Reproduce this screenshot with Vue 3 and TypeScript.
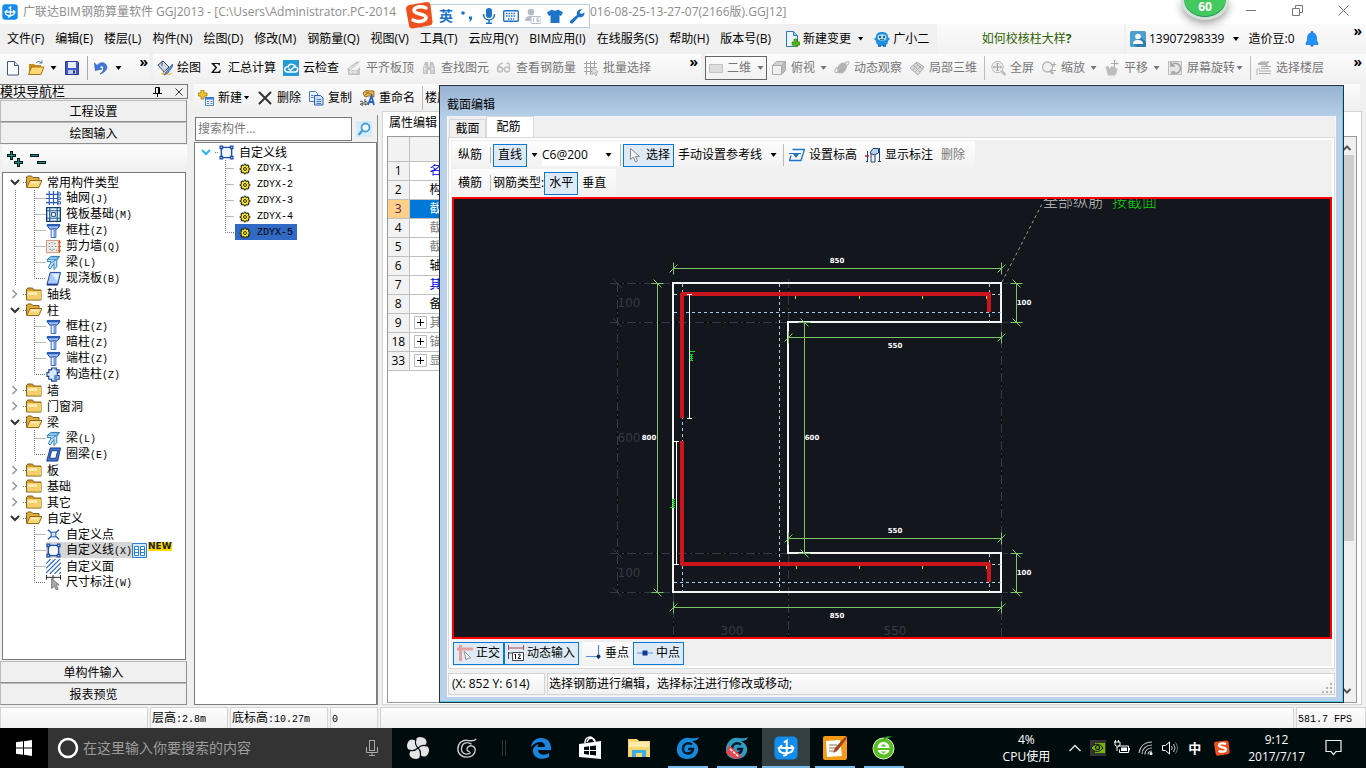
<script setup lang="ts">
import { ref } from 'vue'

interface Tool {
  icon: string
  label: string
  off?: boolean
  caret?: 'wide' | 'tight'
  sep?: boolean
}
interface Row {
  label: string
  key?: string
  icon: string
  child?: boolean
  open?: boolean
  last?: boolean
  rail?: boolean
  selected?: boolean
}

const column = '<path d="M1 2.500h14l-3 4h-8z" fill="#9dbff0" stroke="#1c4a9c"/><path d="M1 1h14v2.500H1z" fill="#2b5cb8"/><path d="M5.500 6.500h5v9h-5z" fill="#f2f7ff" stroke="#2b5cb8"/><path d="M9 7v8" stroke="#6d9be6" stroke-width="2"/>'
const beam = '<path d="M1.500 4.500l4-3h9l-3 4v7l-3 3V9l-4 6-2-1.500 3-6.500h-4z" fill="#bfe3fa" stroke="#2477b8"/><path d="M2 4.500h9l3-3M6 8l5-3M5 2l7 0" stroke="#2477b8" fill="none"/>'
const frame = '<path d="M2.500 2.500h11v11h-11z" fill="#f3f7ff" stroke="#1d50a8" stroke-width="1.500"/><path d="M.5.5h4v4h-4zM11.500.5h4v4h-4zM.5 11.500h4v4h-4zM11.500 11.500h4v4h-4z" fill="#1d50a8"/><path d="M1.800 1.800h1.400v1.400H1.800zM12.800 1.800h1.400v1.400h-1.400zM1.800 12.800h1.400v1.400H1.800zM12.800 12.800h1.400v1.400h-1.400z" fill="#9cc4ff"/>'

const icons: Record<string, string> = {
  app: '<rect x=".3" y=".3" width="15.400" height="15.400" rx="3" fill="#118df0"/><path d="M7 4l1.500-1v8.500q0 1.500-2 1.500M3 8h10M3.200 8c0 2.500 2 3.500 4.500 3.500 3 0 5-1 5-3.500M5 6.500L3.300 8M11.500 6.500L13 8" fill="none" stroke="#fff" stroke-width="1.300" stroke-linecap="round"/>',
  file: '<path d="M2.500 1.500h7l4 4v9.500h-11z" fill="#fff" stroke="#3c5a80"/><path d="M9.500 1.500v4h4" fill="#cfe0f4" stroke="#3c5a80"/>',
  open: '<path d="M1 4h5l1 1h6v9H1z" fill="#c98d1c"/><path d="M3.500 7H16l-3 7.500H.5z" fill="#ffd873" stroke="#a87414"/><path d="M8 3c2-2 4-2 5 0M11.500 3H14V.5" stroke="#44709c" fill="none"/>',
  save: '<path d="M1.500 1.500h12l1 1v12h-13z" fill="#4257c9" stroke="#28379a"/><path d="M4 2h8v6H4z" fill="#e8edff"/><path d="M4 10h8v4H4z" fill="#c2cbe6"/><path d="M9 10.500h2v3H9z" fill="#26368e"/>',
  undo: '<path d="M1.500 3l.8 7.500L9 9 6.500 7.300C8.500 4.500 11 6 10.500 9c-.3 2-1.500 3.500-3.500 5 5-1.500 8-5 6.500-8.500C12 2 7 1.500 4 5.500z" fill="#3b78dc" stroke="#2456ae" stroke-width=".6"/>',
  paint: '<path d="M1 5l5-4 6 6-5 5z" fill="#cfd6df" stroke="#3a4a60"/><path d="M5 6V1" stroke="#3a4a60"/><path d="M15.500 4L9 12l-2 3 3.500-1.500L16 6z" fill="#5b9ce0" stroke="#1f4a8c" stroke-width=".7"/><path d="M7 15l-3-1 4-3z" fill="#e8b02c"/><path d="M9 14c2 2 5 1 6-1z" fill="#f0c13a"/>',
  sum: '<path d="M3.500 3h8.300v2.600h-.8C10.700 4.200 10 4 8 4H6.200l3 3.600-3.500 4.200h3c2 0 2.700-.4 3.200-2h.8l-.5 3.200H3.400v-.8l4-4.600-3.900-3.900z" fill="#111"/>',
  cloud: '<path d="M0 0h16v16H0z" fill="#259bd8"/><path d="M4 12c-4-1-2-6 1-5 1-4 7-3 7 0 4 0 3 5 0 5z" fill="none" stroke="#fff" stroke-width="1.500"/><path d="M5.500 8.500l2 2 5-5" fill="none" stroke="#fff" stroke-width="1.500"/>',
  slab: '<path d="M1 9l9-7 4-1-4 5-8 5zM2 10h9l3-3v8H2z" fill="#c3c3c3"/><path d="M3 12h9M3 9l8-5M5 10v4M9 10v4" stroke="#eee"/>',
  find: '<path d="M2 8l2-6h3l.5 5h1L9 2h3l2 6v6H9v-4H7v4H2z" fill="#c0c0c0"/><path d="M4 5v8M11 5v8M3 9h3M10 9h3" stroke="#ededed"/>',
  glasses: '<circle cx="4" cy="9.500" r="2.500" fill="none" stroke="#bdbdbd" stroke-width="1.500"/><circle cx="11" cy="9.500" r="2.500" fill="none" stroke="#bdbdbd" stroke-width="1.500"/><path d="M1.500 8C2 5 5 3 7 3M6.500 9h2M13.500 9V4c-1-1-2-1-3 0" fill="none" stroke="#bdbdbd" stroke-width="1.300"/>',
  batch: '<path d="M3.500 1v14M7.500 1v14M11.500 1v6M1 3.500h13M1 7.500h13M1 11.500h8" stroke="#a5a5a5" fill="none"/><path d="M9 7l6 5-2.500.3L14 15l-1.500.6-1.300-2.700L9 14.500z" fill="#e8e8e8" stroke="#999" stroke-width=".7"/>',
  flat: '<path d="M1.500 4.500h13v8h-13z" fill="#ddd" stroke="#c2c2c2"/>',
  cube: '<path d="M1.500 5.500h9v9h-9z" fill="#efefef" stroke="#ababab"/><path d="M1.500 5.500l4-4h9l-4 4z" fill="#d4d4d4" stroke="#ababab"/><path d="M10.500 5.500l4-4v9l-4 4z" fill="#bababa" stroke="#ababab"/>',
  orbit: '<ellipse cx="8" cy="8" rx="4.500" ry="6" transform="rotate(35 8 8)" fill="#bcbcbc"/><path d="M3 7c-6 7 1 8 9 0 5-5 3-7-1-4M5 12l6-8M4 9l5-6M7 13l5-6" fill="none" stroke="#a6a6a6"/>',
  local: '<path d="M1 8l7-6 7 5-6 8z" fill="#ddd" stroke="#aaa"/><path d="M4 5l7 7M7 3l6 6M4 10l6-7M6 12l7-7" stroke="#aaa" fill="none"/>',
  full: '<circle cx="7.500" cy="7" r="5.700" fill="#efefef" stroke="#b6b6b6"/><path d="M7.500 3v8M3.500 7h8M6.300 4.200L7.500 3l1.200 1.200M6.300 9.800L7.500 11l1.200-1.200M4.700 5.800L3.500 7l1.200 1.200M10.300 5.800L11.500 7l-1.200 1.200" fill="none" stroke="#a0a0a0"/><path d="M11.500 11l4 4" stroke="#bbb" stroke-width="2.500"/>',
  zoom: '<circle cx="6.500" cy="7" r="5" fill="#f1f1f1" stroke="#b6b6b6" stroke-width="1.300"/><path d="M9 10.500l3 3.500" stroke="#b2b2b2" stroke-width="2.500"/><path d="M13 2v5M10.700 4.500h4.600M11 10.500h4" stroke="#aaa"/>',
  pan: '<path d="M1.500 7l3-1 1 3 2-3 3 1 3 2-1 4-1.500 2.500H4z" fill="#bdbdbd"/><path d="M10.500 0v7M7 3.500h7M9.500 1l1-1 1 1M13 2.500l1 1-1 1" stroke="#aaa" fill="none"/>',
  spin: '<path d="M1.500 1.500h13v13h-13z" fill="#e5e5e5" stroke="#bdbdbd"/><path d="M4 6a5 5 0 1 1 1 6M4 2v4h4M8 12H5v3" fill="none" stroke="#a2a2a2" stroke-width="1.500"/>',
  floors: '<path d="M2 4l3-2h8l-3 2zM5 6.500h10M5 8.500h8M3 11h12M3 13.500h12M2 4h9v2" fill="#ccc" stroke="#a9a9a9"/><path d="M1 9v6M1 9h3" stroke="#b5b5b5"/>',
  change: '<path d="M2.500.5h7l4 4v11h-11z" fill="#eaf5fe" stroke="#2c78b8"/><path d="M9.500.5v4h4" fill="#9bccec" stroke="#2c78b8"/><path d="M10 8h3v3h3v3h-3v2h-3v-2H8v-3h2z" fill="#4fb517" stroke="#2c7e06" stroke-width=".6"/>',
  pet: '<path d="M2 6C2 2 5 1 8 1s6 1 6 5l2 2-2 2c0 4-3 5-6 5s-6-1-6-5L0 8z" fill="#1f8fe0"/><ellipse cx="8" cy="6.500" rx="4.500" ry="3.200" fill="#a9dcf8"/><circle cx="6" cy="6" r="1" fill="#134"/><circle cx="10" cy="6" r="1" fill="#134"/><path d="M6 8.200q2 1.500 4 0" fill="none" stroke="#134" stroke-width=".8"/><path d="M4 15h3M9 15h3" stroke="#0b5ca8" stroke-width="1.500"/>',
  user: '<rect width="16" height="16" rx="1.500" fill="#4c9fd0"/><path d="M10 6l6 5v5H6l-2-3z" fill="#2c7cae"/><circle cx="8" cy="5.500" r="2.800" fill="#fff"/><path d="M3 13c0-3 2-4 5-4s5 1 5 4z" fill="#fff"/>',
  bell: '<path d="M7 .5h2v1.500c3 .7 3.500 3 3.500 5 0 3 .7 4 1.500 5v1.500H2V12c.8-1 1.500-2 1.500-5 0-2 .5-4.300 3.500-5z" fill="#1e90ff" stroke="#1467c0" stroke-width=".6"/><path d="M6 14h4l-2 2z" fill="#1467c0"/>',
  create: '<path d="M3 0h3v3h3v3H6v3H3V6H0V3h3z" fill="#f2c62e" stroke="#a37a0a" stroke-width=".8"/><path d="M7.500 7.500h8v8h-8z" fill="#e9f2ff" stroke="#5a86c8"/><path d="M7 7h9v2.500H7z" fill="#3c78d8"/><path d="M9 11.500h2M12.500 11.500h2M9 13.500h2M12.500 13.500h2" stroke="#5a86c8"/>',
  cross: '<path d="M2.500 2.500l11 11M13.500 2.500l-11 11" stroke="#333" stroke-width="2" stroke-linecap="round"/>',
  copy: '<path d="M1.500 1.500h6l2 2v8h-8z" fill="#eaf2fd" stroke="#4a7dc4"/><path d="M6.500 5.500h6l2.500 2.500v7H6.500z" fill="#cfe1f8" stroke="#2c61ae"/><path d="M8.500 9.500h4.500M8.500 11.500h4.500M8.500 13.500h4.500M3 5.500h2.500M3 7.500h2.500" stroke="#4a7dc4"/>',
  rename: '<path d="M4 3l3-2.500L15 1v6l-5-1-4 1z" fill="#e6b24a" stroke="#70501c" stroke-width=".7"/><path d="M7 2l7 3M6 5l4-3" stroke="#70501c" stroke-width=".6"/><path d="M9 15l3.500-9L15 15M10 12h4.500" fill="none" stroke="#2763bd" stroke-width="1.800"/><path d="M1 11.500c2-1 3 0 3 1V15H2c-1.500-1 0-2 2-1.800M6 9v6c3 0 3-4 0-3.500" fill="none" stroke="#333" stroke-width=".9"/>',
  folder: '<path d="M.5 3.500l1-1.500h5l1.500 2h7v10h-14.500z" fill="#d69c2c" stroke="#80601c"/><path d="M1 5h14v8.500H1z" fill="#f7cf68"/><path d="M2 6h9v3H2z" fill="#fdeaae"/>',
  folderOpen: '<path d="M.5 13V3l1-1h4l1.500 1.500h6V7" fill="#e0ac42" stroke="#80601c"/><path d="M.8 13.500L4 6.500h12l-3.200 7z" fill="#fad676" stroke="#91681b"/><path d="M5 7.500h8l-1 2H4z" fill="#fdebb4"/>',
  grid: '<path d="M3.500 0v15M8 0v15M12.500 0v15M0 3.500h13M0 8h13M0 12.500h13" stroke="#2a5ac0" stroke-width="1.300"/><path d="M13 2h2.500v2.500H13zM13 6.700h2.500v2.500H13zM13 11.300h2.500v2.500H13z" fill="#fff" stroke="#2a5ac0"/>',
  raft: '<path d="M.7.7h14.600v14.600H.7z" fill="#dff0ff" stroke="#123f70" stroke-width="1.400"/><path d="M4 1v14M12 1v14M1 4h14M1 12h14" stroke="#245c94" stroke-width="1.300"/><path d="M6 6h4v4H6z" fill="#fff" stroke="#123f70"/>',
  column,
  beam,
  shear: '<path d="M.5 1.500h13v13H.5z" fill="#ececec" stroke="#d08a6c"/><path d="M3 5h1M6 8h1M9 5h1M4 11h1M8 11h1M6 4h1M3 8h1M10 8h1M6 12h1M11 12h1" stroke="#444"/><path d="M14.500 1v14M13 3.500h3M13 8h3M13 12.500h3" stroke="#d2611e" stroke-width="1.200"/>',
  plate: '<path d="M4.500 1.500h11l-3 13H1z" fill="#a9cbfa" stroke="#153a8c"/><path d="M1 14.500h11.500" stroke="#153a8c" stroke-width="2"/><path d="M6 3h8l-2 8z" fill="#ddecff"/>',
  ring: '<path d="M4.500 1h11l-3 14H.8z" fill="#4273c9" stroke="#153a8c"/><path d="M6 4h6.500L10.500 12H4z" fill="#fff" stroke="#153a8c"/>',
  tie: '<path d="M3 3h3V1h5v2h3v3h-2v3h2v4h-3v2H6v-2H3v-3H1V6h2z" fill="#dceaff" stroke="#16408e" stroke-width="1.200"/><path d="M8 2h3v3h3M9 8l3 1v5H8z" fill="#5b8cdc"/>',
  point: '<path d="M2 3l12 10M14 3L2 13" stroke="#1a5ba8" stroke-width="1.300"/><path d="M5.500 5.500h5v5h-5z" fill="#cfe4fa" stroke="#1a5ba8"/>',
  frame,
  area: '<path d="M0 5l5-5M0 10L10 0M0 15L15 0M4 16L16 4M9 16l7-7M14 16l2-2" stroke="#2b66c4" stroke-width="1.200"/>',
  dimension: '<path d="M.5 0v5M15.500 0v5M7.500 0v5M0 2.500h16" stroke="#222"/><path d="M6 4l8 6.500-3.200.4L13 15l-2 1-2-4-3 2.500z" fill="#aaa" stroke="#777"/>',
  gear: '<path d="M8 1v14M1 8h14M3 3l10 10M13 3L3 13" stroke="#111" stroke-width="3.500"/><circle cx="8" cy="8" r="5" fill="#ffee2d" stroke="#111"/><path d="M8 2v12M2 8h12M4 4l8 8M12 4l-8 8" stroke="#ffee2d" stroke-width="1.500"/><circle cx="8" cy="8" r="2" fill="#ffee2d" stroke="#111" stroke-width="1.200"/>',
  lens: '<path d="M0 0h16v16H0z" fill="#d5ecfa"/><circle cx="9.500" cy="6.500" r="4" fill="#eef8ff" stroke="#4d9fd8" stroke-width="1.800"/><path d="M6.500 9.500L2.500 14" stroke="#4d9fd8" stroke-width="2.500"/>',
  arrow: '<path d="M3.500 1.500v11l3-2.500 2 5 2-1-2-4.500h4z" fill="#f4f4f4" stroke="#888"/>',
  elevation: '<path d="M3.500 2.500h12l-3.500 11H.5l1.500-5" fill="none" stroke="#1f73c8" stroke-width="1.300"/><path d="M0 6.500h12" stroke="#1f73c8"/><path d="M4 7h6l-3 4z" fill="#1f73c8"/>',
  notes: '<path d="M2.500 4v11M14.500 1v14M1 14.500h2M13 14.500h3M6 15V7l4-1v9z" fill="#e8f3fb" stroke="#26456e"/><path d="M5 6l3-4.500h5.500V6L9 8z" fill="#b6d4ee" stroke="#26456e"/><path d="M0 9h4" stroke="#b22" stroke-width="1.500"/>',
  ortho: '<path d="M0 4h16M3.500 0v16" stroke="#e3a0a0" stroke-width="3"/><path d="M7 6l7 7-3 .2L9 15z" fill="#f2f2f2" stroke="#999"/>',
  dyn: '<path d="M.5 0v5M15.500 0v5M1 3h15" stroke="#b04848" fill="none"/><path d="M.5 7v7M1 8h3M4.500 7.500h11v8h-11z" fill="#fff" stroke="#444"/><path d="M7.500 9v5M6.500 10l1-1M10 10q3-2 2 1l-2 2.500h3" fill="none" stroke="#111"/>',
  perp: '<path d="M0 11.500h12M12.500 0v14" stroke="#5591d2" stroke-width="1.200"/><circle cx="12.500" cy="11.500" r="2" fill="#14366e"/>',
  mid: '<path d="M0 8h16" stroke="#6f9fe0" stroke-width="1.200"/><path d="M5.500 5.500h5v5h-5z" fill="#12388e"/>'
}

const menus = ['文件(F)', '编辑(E)', '楼层(L)', '构件(N)', '绘图(D)', '修改(M)', '钢筋量(Q)', '视图(V)', '工具(T)', '云应用(Y)', 'BIM应用(I)', '在线服务(S)', '帮助(H)', '版本号(B)']

const drawTools: Tool[] = [
  { icon: 'paint', label: '绘图' },
  { icon: 'sum', label: '汇总计算' },
  { icon: 'cloud', label: '云检查' },
  { icon: 'slab', label: '平齐板顶', off: true },
  { icon: 'find', label: '查找图元', off: true },
  { icon: 'glasses', label: '查看钢筋量', off: true },
  { icon: 'batch', label: '批量选择', off: true }
]
const viewTools: Tool[] = [
  { icon: 'cube', label: '俯视', off: true, caret: 'wide' },
  { icon: 'orbit', label: '动态观察', off: true },
  { icon: 'local', label: '局部三维', off: true },
  { icon: 'full', label: '全屏', off: true, sep: true },
  { icon: 'zoom', label: '缩放', off: true, caret: 'wide' },
  { icon: 'pan', label: '平移', off: true, caret: 'wide' },
  { icon: 'spin', label: '屏幕旋转', off: true, caret: 'tight' },
  { icon: 'floors', label: '选择楼层', off: true, sep: true }
]
const partTools: Tool[] = [
  { icon: 'create', label: '新建', caret: 'tight' },
  { icon: 'cross', label: '删除' },
  { icon: 'copy', label: '复制' },
  { icon: 'rename', label: '重命名' }
]

const tree: Row[] = [
  { label: '常用构件类型', icon: 'folderOpen', open: true },
  { label: '轴网', key: '(J)', icon: 'grid', child: true, rail: true },
  { label: '筏板基础', key: '(M)', icon: 'raft', child: true, rail: true },
  { label: '框柱', key: '(Z)', icon: 'column', child: true, rail: true },
  { label: '剪力墙', key: '(Q)', icon: 'shear', child: true, rail: true },
  { label: '梁', key: '(L)', icon: 'beam', child: true, rail: true },
  { label: '现浇板', key: '(B)', icon: 'plate', child: true, rail: true, last: true },
  { label: '轴线', icon: 'folder' },
  { label: '柱', icon: 'folderOpen', open: true },
  { label: '框柱', key: '(Z)', icon: 'column', child: true, rail: true },
  { label: '暗柱', key: '(Z)', icon: 'column', child: true, rail: true },
  { label: '端柱', key: '(Z)', icon: 'column', child: true, rail: true },
  { label: '构造柱', key: '(Z)', icon: 'tie', child: true, rail: true, last: true },
  { label: '墙', icon: 'folder' },
  { label: '门窗洞', icon: 'folder' },
  { label: '梁', icon: 'folderOpen', open: true },
  { label: '梁', key: '(L)', icon: 'beam', child: true, rail: true },
  { label: '圈梁', key: '(E)', icon: 'ring', child: true, rail: true, last: true },
  { label: '板', icon: 'folder' },
  { label: '基础', icon: 'folder' },
  { label: '其它', icon: 'folder' },
  { label: '自定义', icon: 'folderOpen', open: true },
  { label: '自定义点', icon: 'point', child: true },
  { label: '自定义线', key: '(X)', icon: 'frame', child: true, selected: true },
  { label: '自定义面', icon: 'area', child: true },
  { label: '尺寸标注', key: '(W)', icon: 'dimension', child: true, last: true }
]

const parts = ['ZDYX-1', 'ZDYX-2', 'ZDYX-3', 'ZDYX-4', 'ZDYX-5']
const activePart = ref('ZDYX-5')

const props = [
  { n: 1, name: '名', tone: 'blue' },
  { n: 2, name: '构', tone: '' },
  { n: 3, name: '截', tone: 'active' },
  { n: 4, name: '截', tone: 'grey' },
  { n: 5, name: '截', tone: 'grey' },
  { n: 6, name: '轴', tone: '' },
  { n: 7, name: '其', tone: 'blue' },
  { n: 8, name: '备', tone: '' },
  { n: 9, name: '其', tone: 'grey', plus: true },
  { n: 18, name: '锚', tone: 'grey', plus: true },
  { n: 33, name: '显', tone: 'grey', plus: true }
]

interface Dim { x1: number; y1: number; x2: number; y2: number; text: string; tx: number; ty: number }
const dims: Dim[] = [
  { x1: 673.5, y1: 268.5, x2: 1001.5, y2: 268.5, text: '850', tx: 837, ty: 263 },
  { x1: 788.5, y1: 337.5, x2: 1001.5, y2: 337.5, text: '550', tx: 895, ty: 348 },
  { x1: 788.5, y1: 538.5, x2: 1001.5, y2: 538.5, text: '550', tx: 895, ty: 533 },
  { x1: 673.5, y1: 607.5, x2: 1001.5, y2: 607.5, text: '850', tx: 837, ty: 618 },
  { x1: 657.5, y1: 283.5, x2: 657.5, y2: 592.5, text: '800', tx: 649, ty: 440 },
  { x1: 804.5, y1: 322.5, x2: 804.5, y2: 553.5, text: '600', tx: 812, ty: 440 },
  { x1: 1016.5, y1: 283.5, x2: 1016.5, y2: 322.5, text: '100', tx: 1024, ty: 305 },
  { x1: 1016.5, y1: 553.5, x2: 1016.5, y2: 592.5, text: '100', tx: 1024, ty: 575 }
]
function ticks(d: Dim): string {
  const ends = [[d.x1, d.y1], [d.x2, d.y2]]
  return ends
    .map(([x, y]) => d.y1 === d.y2
      ? `M${x} ${y - 6}v12M${x - 4} ${y + 4}l8-8`
      : `M${x - 6} ${y}h12M${x - 4} ${y - 4}l8 8`)
    .join('')
}

const sizes = ['C6@200', 'C8@200']
const size = ref('C6@200')
const view = ref('二维')
const partQuery = ref('')
const deskQuery = ref('')
</script>

<template>
  <div class="app">
    <header class="title">
      <svg class="ic" viewBox="0 0 16 16" v-html="icons.app"></svg>
      <span class="path-a">广联达BIM钢筋算量软件 GGJ2013 - [C:\Users\Administrator.PC-2014</span>
      <span class="path-b">016-08-25-13-27-07(2166版).GGJ12]</span>
      <div class="win">
        <button aria-label="最小化"><svg width="11" height="11"><path d="M0 5.500h10" /></svg></button>
        <button aria-label="还原"><svg width="11" height="11"><path d="M.5 3.500h7v7h-7zM3.500 3V.5h7v7H8" /></svg></button>
        <button aria-label="关闭"><svg width="11" height="11"><path d="M.5.5l10 10M10.500.5l-10 10" /></svg></button>
      </div>
    </header>

    <div class="ime">
      <svg class="ime-logo" viewBox="0 0 28 28"><path d="M4 4l18-3q3 0 3.500 3l2 17q0 3-3 3.500l-17 3q-3 0-3.500-3L1 8q0-3 3-4z" fill="#f0501e" /><path d="M21 7c-5-2.500-12-1-12 2.500 0 4 12 3 12 7 0 4-8 5-13 2.500" fill="none" stroke="#fff" stroke-width="3.500" stroke-linecap="round" /></svg>
      <div class="ime-bar">
        <b>英</b>
        <svg class="ic" viewBox="0 0 16 16"><circle cx="4" cy="5" r="1.800" fill="#1b74c8" /><path d="M10 8.500h3c.5 3-1 5-3 5 1-1 1.500-2 0-2.500z" fill="#1b74c8" /></svg>
        <svg class="ic" viewBox="0 0 16 16"><rect x="5" y="0" width="6" height="10" rx="3" fill="#1b74c8" /><path d="M2.500 6c0 8 11 8 11 0M8 12v3M5 15.300h6" fill="none" stroke="#1b74c8" stroke-width="1.500" /></svg>
        <svg class="ic" viewBox="0 0 16 16"><rect x=".7" y="2.700" width="14.600" height="10.600" rx="1" fill="none" stroke="#1b74c8" stroke-width="1.400" /><path d="M3 5.500h10M3 8h10M5 11h6" stroke="#1b74c8" stroke-width="1.400" stroke-dasharray="1.500 1" /></svg>
        <svg class="ic" viewBox="0 0 16 16"><circle cx="6" cy="4" r="3.300" fill="#b5bdc9" /><path d="M0 13c0-7 12-7 12 0z" fill="#b5bdc9" /><rect x="6" y="8.500" width="10" height="7" rx="1" fill="#fff" stroke="#b5bdc9" /><path d="M8.500 10v4M14 10h-2v3.500h2V12h-2" fill="none" stroke="#b5bdc9" /></svg>
        <svg class="ic" viewBox="0 0 16 16"><path d="M5 1.500c1 1.500 5 1.500 6 0l5 3-2 3.500-1.500-.8V15h-9V7.200L2 8 0 4.500z" fill="#1b74c8" /></svg>
        <svg class="ic" viewBox="0 0 16 16"><path d="M1 13L8 7C7 3 10 .5 13 1.500L10.500 4l1.500 2 3.500-1.500C15.500 9 12 10 9.500 9L4 15c-2 1.500-4-.5-3-2z" fill="#1b74c8" /></svg>
      </div>
    </div>
    <div class="ball">60</div>

    <nav class="menu">
      <div class="menu-main">
        <button v-for="m in menus" :key="m">{{ m }}</button>
        <button class="with-icon"><svg class="ic" viewBox="0 0 16 16" v-html="icons.change"></svg><span>新建变更</span><i class="caret"></i></button>
        <button class="with-icon"><svg class="ic" viewBox="0 0 16 16" v-html="icons.pet"></svg><span>广小二</span></button>
      </div>
      <div class="menu-tip"><a href="#">如何校核柱大样<b>?</b></a></div>
      <div class="menu-user">
        <button class="with-icon"><svg class="ic" viewBox="0 0 16 16" v-html="icons.user"></svg><span>13907298339</span><i class="caret"></i></button>
        <button>造价豆:0</button>
        <button aria-label="消息"><svg class="ic" viewBox="0 0 16 16" v-html="icons.bell"></svg></button>
        <span class="more">»</span>
      </div>
    </nav>

    <div class="bars">
      <div class="bar bar-file">
        <button aria-label="新建"><svg class="ic" viewBox="0 0 16 16" v-html="icons.file"></svg></button>
        <button aria-label="打开"><svg class="ic" viewBox="0 0 16 16" v-html="icons.open"></svg><i class="caret"></i></button>
        <button aria-label="保存"><svg class="ic" viewBox="0 0 16 16" v-html="icons.save"></svg></button>
        <button aria-label="撤销" class="undo"><svg class="ic" viewBox="0 0 16 16" v-html="icons.undo"></svg><i class="caret"></i></button>
        <span class="more">»</span>
      </div>
      <div class="bar bar-draw">
        <button v-for="t in drawTools" :key="t.label" class="tool" :class="{ off: t.off }">
          <svg class="ic" viewBox="0 0 16 16" v-html="icons[t.icon]"></svg><span>{{ t.label }}</span>
        </button>
        <span class="more">»</span>
      </div>
      <div class="bar bar-view">
        <label class="mode off">
          <svg class="ic" viewBox="0 0 16 16" v-html="icons.flat"></svg>
          <select v-model="view" aria-label="视图模式"><option>二维</option><option>三维</option></select>
          <i class="caret"></i>
        </label>
        <button v-for="t in viewTools" :key="t.label" class="tool" :class="{ off: t.off, sep: t.sep }">
          <svg class="ic" viewBox="0 0 16 16" v-html="icons[t.icon]"></svg><span>{{ t.label }}</span><i v-if="t.caret" class="caret" :class="t.caret"></i>
        </button>
        <span class="more">»</span>
      </div>
    </div>

    <main class="main">
      <aside class="nav">
        <div class="nav-head">
          <span>模块导航栏</span>
          <svg width="10" height="10"><path d="M2.500 6V.5h4V6M5.500 1v5M0 6.500h9M4.500 7v3" fill="none" stroke="#000" /></svg>
          <svg width="8" height="8"><path d="M.5.5l7 7M7.500.5l-7 7" fill="none" stroke="#333" /></svg>
        </div>
        <button class="drawer">工程设置</button>
        <button class="drawer">绘图输入</button>
        <div class="nav-tools">
          <button aria-label="全部展开"><svg width="16" height="16"><path d="M4.500 0v9M0 4.500h9M11.500 7v9M7 11.500h9" stroke="#001818" stroke-width="3" /><path d="M4.500 1v7M1 4.500h7M11.500 8v7M8 11.500h7" stroke="#12908a" stroke-width="1" /></svg></button>
          <button aria-label="全部折叠"><svg width="16" height="16"><path d="M0 4.500h9M7 11.500h9" stroke="#001818" stroke-width="3" /><path d="M1 4.500h7M8 11.500h7" stroke="#12908a" stroke-width="1" /></svg></button>
        </div>
        <ul class="tree">
          <li v-for="(r, i) in tree" :key="i">
            <svg v-if="!r.child" width="23" height="16">
              <path v-if="r.open" d="M8 6l4 4 4-4" class="chev dark" />
              <path v-else d="M9.500 4l4 4-4 4" class="chev" />
              <path d="M20 8.500h3" class="dots" />
            </svg>
            <svg v-else width="43" height="16">
              <path v-if="r.rail" d="M12.500 0v16" class="dots" />
              <path :d="r.last ? 'M31.500 0v8.500h11' : 'M31.500 0v16M31.500 8.500h11'" class="dots" />
            </svg>
            <span class="node" :class="{ picked: r.selected }">
              <svg class="ic" :class="{ small: r.child }" viewBox="0 0 16 16" v-html="icons[r.icon]"></svg><span class="label">{{ r.label }}<span v-if="r.key" class="mono">{{ r.key }}</span></span>
            </span>
            <template v-if="r.selected">
              <svg width="15" height="15"><path d="M.5.5h14v14H.5z" fill="#d4ebff" stroke="#2b7fd0" /><path d="M2.500 3.500h4v9h-4zM8.500 3.500h4v9h-4z" fill="#fff" stroke="#2b7fd0" /><path d="M3 6.500h3M3 9.500h3M9 6.500h3M9 9.500h3" stroke="#2b7fd0" /></svg>
              <em class="new">NEW</em>
            </template>
          </li>
        </ul>
        <button class="drawer">单构件输入</button>
        <button class="drawer">报表预览</button>
      </aside>

      <div class="work">
        <div class="bar part-bar">
          <button v-for="t in partTools" :key="t.label" class="tool">
            <svg class="ic" viewBox="0 0 16 16" v-html="icons[t.icon]"></svg><span>{{ t.label }}</span><i v-if="t.caret" class="caret" :class="t.caret"></i>
          </button>
          <button class="tool sep tail">楼层</button>
        </div>
        <div class="work-body">
          <section class="parts">
            <div class="search">
              <input v-model="partQuery" aria-label="搜索构件" placeholder="搜索构件..." />
              <button aria-label="搜索"><svg class="ic" viewBox="0 0 16 16" v-html="icons.lens"></svg></button>
            </div>
            <ul class="tree part-tree">
              <li>
                <svg width="24" height="16"><path d="M7 6l4 4 4-4" class="chev cyan" /><path d="M20 8.500h4" class="dots" /></svg>
                <span class="node"><svg class="ic small" viewBox="0 0 16 16" v-html="icons.frame"></svg><span class="label">自定义线</span></span>
              </li>
              <li v-for="(p, i) in parts" :key="p">
                <svg width="39" height="16"><path :d="i === parts.length - 1 ? 'M30.500 0v8.500h9' : 'M30.500 0v16M30.500 8.500h9'" class="dots" /></svg>
                <button class="part" :class="{ on: p === activePart }" @click="activePart = p"><svg viewBox="0 0 16 16" v-html="icons.gear"></svg><span class="mono">{{ p }}</span></button>
              </li>
            </ul>
          </section>

          <section class="props">
            <h2>属性编辑</h2>
            <div class="props-box">
              <table>
                <colgroup><col class="num" /><col /></colgroup>
                <thead><tr><th></th><th></th></tr></thead>
                <tbody>
                  <tr v-for="p in props" :key="p.n" :class="p.tone">
                    <th scope="row">{{ p.n }}</th>
                    <td><div><span class="plus"><svg v-if="p.plus" width="13" height="13"><path d="M.5.5h12v12H.5z" fill="#fff" stroke="#bbb" /><path d="M3 6.500h7M6.500 3v7" stroke="#000" /></svg></span>{{ p.name }}</div></td>
                  </tr>
                </tbody>
              </table>
              <div class="scroll">
                <svg width="14" height="14"><path d="M3.500 9L7 5.500 10.500 9" /></svg>
                <i></i>
                <svg width="14" height="14"><path d="M3.500 5L7 8.500 10.500 5" /></svg>
              </div>
            </div>
          </section>
        </div>
      </div>

      <section class="dialog" role="dialog" aria-label="截面编辑">
        <h1>截面编辑</h1>
        <div class="dlg-body">
          <div class="tabs"><button>截面</button><button class="on">配筋</button></div>
          <div class="page">
            <div class="row">
              <div class="strip">
                <span class="cap">纵筋</span>
                <button class="press">直线</button><i class="caret"></i>
                <label class="combo"><select v-model="size" aria-label="钢筋规格"><option v-for="s in sizes" :key="s">{{ s }}</option></select><i class="caret"></i></label>
                <button class="press pic"><svg class="ic" viewBox="0 0 16 16" v-html="icons.arrow"></svg>选择</button>
                <button class="plain">手动设置参考线<i class="caret wide"></i></button>
                <button class="plain ruled"><svg class="ic" viewBox="0 0 16 16" v-html="icons.elevation"></svg>设置标高</button>
                <button class="plain"><svg class="ic" viewBox="0 0 16 16" v-html="icons.notes"></svg>显示标注</button>
                <button class="plain off">删除</button>
              </div>
            </div>
            <div class="row">
              <div class="strip">
                <span class="cap">横筋</span>
                <span>钢筋类型:</span>
                <button class="press">水平</button>
                <button class="plain">垂直</button>
              </div>
            </div>
            <div class="canvas">
              <svg viewBox="454 199 876 438" role="img" aria-label="截面配筋图">
                <g fill="none">
                  <g stroke="#000"><path d="M610 283.500h63M610 322.500h178M610 553.500h178M610 592.500h63M617.500 283v309M673.500 592v46M788.500 279v43M788.500 553v85M1001.500 322v316" /></g>
                  <g stroke="#343a45" stroke-dasharray="9 3 2 3"><path d="M610 283.500h63M610 322.500h178M610 553.500h178M610 592.500h63M617.500 283v309M673.500 592v46M788.500 279v43M788.500 553v85M1001.500 322v316M1003 283.500h5M1003 322.500h5M1003 553.500h5M1003 592.500h5" /></g>
                  <path d="M613 279l9 9M613 318l9 9M613 549l9 9M613 588l9 9" stroke="#343a45" />
                  <path d="M1002 282l41-80" stroke="#999" stroke-dasharray="3 3" />
                  <path d="M673 283H1001V322H788V553H1001V592H673Z" stroke="#f4f4f4" stroke-width="2" />
                  <path d="M674 312.500h327M674 582.500h327M779.500 284v308M682.500 284v308M989.500 284v38M989.500 554v38M674 294.500h8M992 294.500h9M674 564.500h8M992 564.500h9" stroke="#a9cbea" stroke-dasharray="3 3" />
                  <g stroke="#7cc468">
                    <template v-for="(d, i) in dims" :key="i"><path :d="`M${d.x1} ${d.y1}L${d.x2} ${d.y2}` + ticks(d)" /></template>
                  </g>
                  <path d="M682 418V294H989V312M682 441V564H989V582" stroke="#cb161d" stroke-width="4" stroke-linejoin="round" />
                  <path d="M689.500 295v124M687 294.500h5M687 418.500h5M676.500 441v124M674 441.500h5M674 564.500h5" stroke="#fff" />
                  <path d="M795.500 296v3M859.500 296v3M922.500 296v3M986.500 296v3M796.500 566v3M859.500 566v3M922.500 566v3M986.500 566v3" stroke="#e8c81c" />
                  <path d="M690 351.500h5M690 354.500h3M690 356.500h3M690 358.500h3M690 360.500h3M672 499.500h3M672 501.500h3M672 503.500h3M672 505.500h3M670 507.500h5" stroke="#0be40b" />
                  <path d="M691.500 354v6M673.500 499v8" stroke="#0be40b" />
                </g>
                <g class="tag"><text v-for="(d, i) in dims" :key="i" :x="d.tx" :y="d.ty">{{ d.text }}</text></g>
                <g class="axis"><text x="629" y="307">100</text><text x="629" y="442">600</text><text x="629" y="577">100</text><text x="732" y="635">300</text><text x="895" y="635">550</text></g>
                <g class="note"><text x="1043" y="207" fill="#c4c4c4">全部纵筋</text><text x="1112" y="207" fill="#11d411">按截面</text></g>
              </svg>
            </div>
            <div class="snap">
              <button class="press pic"><svg class="ic" viewBox="0 0 16 16" v-html="icons.ortho"></svg>正交</button>
              <button class="press pic"><svg class="ic" viewBox="0 0 16 16" v-html="icons.dyn"></svg>动态输入</button>
              <div class="strip snap-strip">
                <button class="plain"><svg class="ic" viewBox="0 0 16 16" v-html="icons.perp"></svg>垂点</button>
                <button class="press pic"><svg class="ic" viewBox="0 0 16 16" v-html="icons.mid"></svg>中点</button>
              </div>
            </div>
          </div>
          <div class="dlg-status">
            <span>(X: 852 Y: 614)</span>
            <span>选择钢筋进行编辑，选择标注进行修改或移动;<svg width="12" height="12"><path d="M9 1h2v2H9zM9 5h2v2H9zM5 5h2v2H5zM9 9h2v2H9zM5 9h2v2H5zM1 9h2v2H1z" fill="#b4b4b4" /></svg></span>
          </div>
        </div>
      </section>
    </main>

    <footer class="status">
      <span></span>
      <span>层高<i class="mono">:2.8m</i></span>
      <span>底标高<i class="mono">:10.27m</i></span>
      <span><i class="mono">0</i></span>
      <span></span>
      <span><i class="mono">581.7 FPS</i></span>
    </footer>

    <div class="task">
      <button class="start" aria-label="开始"><svg width="16" height="16"><path d="M0 2.300L7 1.300v6.200H0zM8 1.200L16 0v7.500H8zM0 8.500h7v6.200l-7-1zM8 8.500h8V16l-8-1.200z" fill="#fff" /></svg></button>
      <label class="desk">
        <svg width="22" height="22"><circle cx="11" cy="11" r="9" fill="none" stroke="#fff" stroke-width="2.500" /></svg>
        <input v-model="deskQuery" aria-label="搜索" placeholder="在这里输入你要搜索的内容" />
        <svg width="12" height="16"><rect x="3.500" y=".5" width="5" height="10" fill="none" stroke="#aaa" /><path d="M.5 7v5.500h11V7M6 13v2.500M3 15.500h6" fill="none" stroke="#aaa" /></svg>
      </label>
      <div class="apps">
        <button aria-label="浏览器助手"><svg width="24" height="24" viewBox="0 0 24 24"><g fill="#e4e4e4"><path d="M11 11C8 5 10 1 14 1s8 3 6 7-6 4-9 3z" /><path d="M13 11c6-3 10-1 10 3s-3 8-7 6-4-6-3-9z" /><path d="M13 13c3 6 1 10-3 10s-8-3-6-7 6-4 9-3z" /><path d="M11 13c-6 3-10 1-10-3s3-8 7-6 4 6 3 9z" /></g><path d="M12 12C9 9 9 6 10 3M12 12c3-3 6-3 9-2M12 12c3 3 3 6 2 9M12 12c-3 3-6 3-9 2" fill="none" stroke="#000b0e" stroke-width="1.200" /></svg></button>
        <button aria-label="广联达G"><svg width="22" height="22" viewBox="0 0 24 24"><path d="M22 2c-2 3-5 2-8 2C7 2 2 7 2 13s5 9 10 9 9-3 9-8c0-4-5-6-8-3-2 2-1 5 2 5M17 8C12 4 6 7 6 13s7 7 10 4" fill="none" stroke="#ccc" stroke-width="1.500" /></svg></button>
        <i class="divider"></i>
        <button aria-label="Edge"><svg width="22" height="22" viewBox="0 0 22 22"><path d="M1 10C2 3 7 1 11 1c6 0 10 4 10 10v2H8c0 5 7 6 11 3v4C11 24 3 21 3 14c0-4 3-6 6-7-1 1-1.500 2-1.500 3H15C15 3 6 4 1 10z" fill="#1a84e0" /></svg></button>
        <button aria-label="应用商店"><svg width="22" height="24" viewBox="0 0 22 24"><path d="M0 8l22-3v18l-22-2z" fill="#fff" /><path d="M6 7c0-7 8-8 9-2M8 6c2-6 8-4 8 0" fill="none" stroke="#fff" stroke-width="1.500" /><path d="M5 11l5-.7V14H5zM11 10.200l6-.7V14h-6zM5 15h5v3.700L5 18zM11 15h6v4.500l-6-.7z" fill="#000b0e" /></svg></button>
        <button aria-label="文件资源管理器"><svg width="22" height="20" viewBox="0 0 22 20"><path d="M0 1h9l2 2h11v16H0z" fill="#f8d66e" /><path d="M1 4h20v5H1z" fill="#fcebac" /><path d="M4 12h14v7h-4v-4H8v4H4z" fill="#38b0e6" /></svg></button>
        <button class="run" aria-label="广联达G+"><svg width="24" height="24" viewBox="0 0 24 24"><path d="M23 1c-1 3-4 4-7 4 3 2 7 4 6 10-1 5-5 8-11 8S0 19 1 12C2 6 7 1 13 2c4 0 7 1 10-1z" fill="#148bdd" /><path d="M16 8.500c-4-3-9-.5-9 4.500 0 6 9 6 10 0h-5" fill="none" stroke="#051a28" stroke-width="2.500" /></svg></button>
        <button class="run" aria-label="广联达工具"><svg width="24" height="24" viewBox="0 0 24 24"><path d="M23 1c-1 3-4 4-7 4 3 2 7 4 6 10-1 5-5 8-11 8S0 19 1 12C2 6 7 1 13 2c4 0 7 1 10-1z" fill="#2f9cc4" /><path d="M16 8.500c-4-3-9-.5-9 4.500 0 6 9 6 10 0h-5" fill="none" stroke="#051a28" stroke-width="2.500" /><path d="M4 9l13 11q-4 4-9 2L1 17z" fill="#e8444f" /><path d="M5 13l9 8" stroke="#fff" stroke-width="1.500" stroke-dasharray="3 1" /></svg></button>
        <button class="run current" aria-label="钢筋算量"><svg width="24" height="24" viewBox="0 0 16 16" v-html="icons.app"></svg></button>
        <button class="run" aria-label="写字板"><svg width="24" height="24" viewBox="0 0 24 24"><rect width="24" height="24" rx="2" fill="#f49a17" /><path d="M3 5l14-1 2 16-15 1z" fill="#fff" /><path d="M6 9h8M6 12h9M6 15h8" stroke="#8b7050" /><path d="M22 1L12 12l-2 5 5-3 9-12z" fill="#a5401b" /></svg></button>
        <button class="run" aria-label="安全浏览器"><svg width="24" height="24" viewBox="0 0 24 24"><circle cx="11.500" cy="12.500" r="10.500" fill="#58bf1f" stroke="#d9f5cb" /><path d="M12 2C14 0 18 0 21 1c-3 0-6 1-9 3z" fill="#2f9c22" /><path d="M5.500 12h12c0-8-12-8-12 0zM5.500 14h12l-1 2.500c-4 4-10 1-11-2.500z" fill="#fff" /><path d="M8.500 10.500h6L11.500 8zM8.500 15.500h6l-3 2z" fill="#58bf1f" /></svg></button>
      </div>
      <div class="tray">
        <div class="cpu"><span>4%</span><span>CPU使用</span></div>
        <svg width="14" height="14"><path d="M1.500 10L7 4.500l5.500 5.500" fill="none" stroke="#ddd" stroke-width="1.500" /></svg>
        <svg width="16" height="16" viewBox="0 0 16 16"><path d="M0 0h16v16H0z" fill="#333" /><path d="M5 3h10v10H5z" fill="#75b505" /><path d="M1 8c3-5 9-5 12 0-3 4-8 5-12 0z" fill="#75b505" stroke="#111" /><circle cx="7.500" cy="7.500" r="2" fill="none" stroke="#111" stroke-width="1.200" /></svg>
        <svg width="16" height="16" viewBox="0 0 16 16"><path d="M3.500 6h11v6.500h-9V9.500" fill="none" stroke="#fff" /><path d="M7 7.500h6V11H7zM15 8h1v2.500h-1z" fill="#fff" /><path d="M0 2h6v3L3.500 7 1 5V2M1.500 0v2M4.500 0v2M3 7v4" fill="none" stroke="#fff" /></svg>
        <svg width="16" height="16" viewBox="0 0 16 16"><path d="M1 13C2 6 7 2 14 2M4 14c0-5 4-9 10-9M7 14.500c0-4 3-6.500 7-6.500M10 14.500c0-2 2-3.500 4-3.500" fill="none" stroke="#bbb" stroke-width="1.200" /><circle cx="13" cy="13.500" r="1.500" fill="#fff" /></svg>
        <svg width="16" height="16" viewBox="0 0 16 16"><path d="M.5 5.500h3l4-3.500v12l-4-3.500h-3z" fill="none" stroke="#fff" /><path d="M9.500 6q1.500 2 0 4M11.500 4q3 4 0 8" fill="none" stroke="#ccc" /><path d="M13.500 2.500q4 5.500 0 11" fill="none" stroke="#777" /></svg>
        <b class="zh">中</b>
        <svg width="16" height="16" viewBox="0 0 28 28"><path d="M3 3l19-2q3 0 3.500 3l2 17q0 3-3 3.500l-18 3q-3 0-3.500-3L0 6q0-3 3-3z" fill="#f0501e" /><path d="M21 7c-5-2.500-12-1-12 2.500 0 4 12 3 12 7 0 4-8 5-13 2.500" fill="none" stroke="#fff" stroke-width="4" /></svg>
        <div class="clock"><span>9:12</span><span>2017/7/17</span></div>
        <button class="msg" aria-label="通知"><svg width="18" height="18"><path d="M1 1.500h15v11h-5l-2.500 3-2.500-3H1z" fill="none" stroke="#eee" stroke-width="1.200" /></svg></button>
      </div>
    </div>
  </div>
</template>

<style>
html, body { margin: 0; overflow: hidden; }
</style>

<style scoped>
.app { height: 100vh; display: flex; flex-direction: column; position: relative; overflow: hidden; background: #f0f0f0; color: #000; font: 12px/16px "Open Sans", "Noto Sans", "Noto Sans CJK SC", sans-serif; white-space: nowrap; }
.app * { box-sizing: border-box; }
button, input, select { font: inherit; color: inherit; background: none; border: 0; padding: 0; margin: 0; border-radius: 0; }
button { display: inline-flex; align-items: center; }
select { appearance: none; }
svg { flex: none; display: block; }
i, em { font-style: normal; }
.ic { width: 16px; height: 16px; }
.ic.small { width: 15px; height: 15px; }
.mono { font: 10px/16px "Liberation Mono", monospace; }
.off { color: #777; }
.caret { width: 7px; height: 4px; flex: none; background: currentColor; clip-path: polygon(8% 0, 92% 0, 50% 100%); }
.more { margin-left: auto; align-self: flex-start; font: 700 14px/14px "Open Sans", sans-serif; }

.title { height: 24px; flex: none; display: flex; align-items: center; background: #fff; color: #8d8d8d; padding-left: 2px; }
.path-a { width: 387px; margin-left: 5px; overflow: hidden; }
.path-b { margin-left: 180px; }
.win { margin-left: auto; display: flex; align-self: flex-start; }
.win button { width: 46px; height: 20px; justify-content: center; }
.win path { fill: none; stroke: #777; }
.ime { position: absolute; left: 405px; top: 1px; width: 185px; display: flex; align-items: flex-start; z-index: 3; }
.ime-logo { width: 28px; height: 28px; margin-right: -14px; z-index: 1; }
.ime-bar { flex: 1; height: 24px; margin-top: 3px; display: flex; align-items: center; gap: 6px; border: 1px solid #b5cde3; background: #fff; padding-left: 19px; }
.ime b { font-size: 14px; color: #1b74c8; }
.ball { position: absolute; right: 137px; top: 0; width: 48px; height: 20px; border-radius: 0 0 24px 24px / 0 0 20px 20px; background: #43c95e; border: 3px solid #d5dfd8; border-top: 0; box-shadow: inset 0 -1px #188f60, 0 3px 8px #999; color: #fff; font-weight: 700; line-height: 14px; text-align: center; z-index: 3; }

.menu { height: 30px; flex: none; display: flex; gap: 2px; }
.menu-main { display: flex; padding: 0 0 1px 2px; width: 935px; flex: none; overflow: hidden; }
.menu-main button { padding: 0 6px 0 5px; }
.with-icon span { margin-left: 3px; }
.with-icon .caret { margin-left: 8px; }
.menu-main .with-icon { padding: 0 3px 0 7px; }
.menu-main .caret { margin-left: 6px; }
.menu-tip, .menu-user { background: linear-gradient(#fafafa, #f2f2f2); }
.menu-tip { width: 187px; display: flex; align-items: center; justify-content: center; padding-right: 8px; }
.menu-tip a { color: #2e6200; text-decoration: none; }
.menu-user { flex: 1; display: flex; padding: 0 4px; gap: 9px; }

.bars { height: 30px; flex: none; display: flex; gap: 4px; }
.bar { display: flex; align-items: center; background: linear-gradient(#fcfcfc, #efefef); padding-bottom: 2px; }
.bar .more { padding-top: 1px; }
.bar-file { width: 149px; padding: 0 1px 2px 5px; gap: 7px; }
.bar-file .caret { margin-left: 6px; }
.undo { border-left: 1px solid #aaa; padding-left: 5px; height: 24px; }
.bar-draw { width: 548px; padding: 0 3px 2px 4px; gap: 7px; }
.bar-view { flex: 1; padding-right: 4px; gap: 7px; }
.tool { gap: 4px; height: 24px; }
.tool.sep { border-left: 1px solid #bbb; padding-left: 5px; }
.tool.tail { padding-left: 2px; }
.caret.wide { margin-left: 1px; }
.caret.tight { margin-left: -3px; }
.mode { width: 62px; height: 24px; border: 1px solid #666; display: flex; align-items: center; gap: 3px; padding-left: 2px; margin-right: -3px; }
.mode select { width: 27px; }

.main { flex: 1; min-height: 0; position: relative; display: flex; gap: 5px; padding-bottom: 2px; }
.nav { width: 189px; flex: none; display: flex; flex-direction: column; padding-right: 1px; }
.nav-head { height: 15px; display: flex; align-items: center; gap: 12px; border: 1px solid #777; border-left: 0; padding-right: 4px; font-size: 13px; line-height: 13px; margin-bottom: 1px; }
.nav-head span { flex: 1; }
.drawer { height: 22px; flex: none; width: 187px; justify-content: center; padding-top: 2px; border: 1px solid #8f8f8f; border-color: #bbb #8f8f8f #8f8f8f #bbb; }
.nav-tools { height: 27px; margin: 1px 1px 0 2px; flex: none; display: flex; align-items: center; gap: 7px; padding-left: 5px; background: linear-gradient(#fdfdfd, #f0f0f0); }
.tree { list-style: none; margin: 0 2px 1px; padding: 1px 0; flex: 1; min-height: 0; background: #fff; border: 1px solid #7b7b7b; overflow: hidden; }
.tree li { height: 16px; display: flex; align-items: center; }
.node { display: flex; align-items: center; gap: 5px; height: 16px; }
.label { padding-top: 1px; }
.picked { background: #d6d6d6; }
.chev { fill: none; stroke: #999; stroke-width: 1.500px; }
.chev.dark { stroke: #333; stroke-width: 2px; }
.chev.cyan { stroke: #22b8ee; stroke-width: 2px; }
.dots { fill: none; stroke: #777; stroke-dasharray: 1 1; }
.new { font: 700 9px/9px "DejaVu Sans", sans-serif; color: #222; background: #ffdc00; margin-left: 1px; align-self: flex-start; }

.work { flex: 1; min-width: 0; display: flex; flex-direction: column; }
.part-bar { height: 27px; flex: none; padding: 0 0 0 4px; gap: 7px; margin-right: 6px; }
.work-body { flex: 1; min-height: 0; display: flex; gap: 4px; }
.parts { width: 184px; flex: none; display: flex; flex-direction: column; border-right: 1px solid #888; margin-top: 4px; }
.search { height: 27px; flex: none; display: flex; align-items: center; gap: 4px; padding-left: 1px; }
.search input { width: 157px; height: 24px; border: 1px solid #777; background: #fff; padding: 0 2px; }
.search input::placeholder { color: #777; opacity: 1; }
.part-tree { margin: 0; }
.part { height: 16px; gap: 6px; padding: 1px 4px 0; margin-left: 1px; }
.part svg { width: 12px; height: 12px; }
.part.on { background: #316ac5; }

.props { flex: 1; min-width: 0; display: flex; flex-direction: column; background: #fff; border: 1px solid #d4d4d4; margin-right: 4px; padding: 0 4px 1px; }
.props h2 { font: inherit; margin: 0; padding: 3px 2px 4px; height: 24px; }
.props-box { flex: 1; min-height: 0; display: flex; border: 1px solid #999; justify-content: space-between; align-items: flex-start; }
table { border-collapse: collapse; width: 320px; table-layout: fixed; }
.num { width: 21px; }
th, td { padding: 0; font-weight: 400; border: 1px solid #c0c0c0; border-left: 0; height: 19px; line-height: 16px; text-align: center; }
thead th { height: 24px; border-top: 0; }
th { background: #f2f2f2; }
td div { display: flex; align-items: center; }
.plus { width: 20px; padding-left: 4px; }
.blue td { color: #0000f0; }
.grey td { color: #808080; }
.active td { background: #0078d7; color: #fff; }
.active th { background: #ffd08a; color: #602050; }
.scroll { align-self: stretch; width: 18px; display: flex; flex-direction: column; align-items: center; background: #f0f0f0; padding: 4px 2px; }
.scroll i { width: 14px; height: 386px; background: #cdcdcd; margin-bottom: auto; }
.scroll path { fill: none; stroke: #555; stroke-width: 2px; }

.dialog { position: absolute; left: 439px; right: 22px; top: 1px; bottom: 4px; border: 1px solid #24323a; background: linear-gradient(#97b2d0, #b9d1ea 34px); display: flex; flex-direction: column; padding: 0 7px 5px; box-shadow: inset -1px -1px #55cdef; }
.dialog h1 { font: inherit; margin: 0; height: 30px; padding-top: 11px; flex: none; }
.dlg-body { flex: 1; min-height: 0; background: #f0f0f0; display: flex; flex-direction: column; border: 1px solid #f8f8f8; border-top: 0; }
.tabs { height: 21px; flex: none; display: flex; align-items: flex-end; padding-left: 1px; }
.tabs button { height: 18px; width: 37px; justify-content: center; border: 1px solid #d9d9d9; border-bottom: 0; }
.tabs .on { height: 21px; width: 48px; background: #fff; padding-right: 5px; padding-left: 2px; }
.page { flex: 1; min-height: 0; display: flex; flex-direction: column; border: 1px solid #d9d9d9; background: #f0f0f0; padding: 2px; box-shadow: inset 0 0 0 2px #fff; }
.row { height: 28px; flex: none; display: flex; padding-left: 1px; }
.row:first-child { margin-top: 1px; }
.strip { display: flex; align-items: center; background: linear-gradient(#fdfdfd, #f1f1f1); padding-right: 6px; }
.cap { width: 39px; padding-left: 6px; border-right: 1px solid #bbb; margin-right: 2px; }
.press { height: 23px; padding: 0 4px; gap: 3px; border: 1px solid #0a78d4; background: #deebf6; }
.press.pic { padding: 0 3px; }
.strip > .caret { margin: 0 4px; }
.combo { background: #fff; width: 79px; height: 22px; display: flex; align-items: center; padding-right: 8px; border-right: 1px solid #bbb; margin-right: 2px; }
.combo select { flex: 1; }
.plain { height: 22px; padding: 0 4px; gap: 4px; }
.plain .caret.wide { margin: 0 2px 0 4px; }
.ruled { border-left: 1px solid #bbb; padding-left: 5px; }
.canvas { flex: 1; min-height: 0; border: 2px solid #f00; background: #14161e; margin-left: 1px; overflow: hidden; }
.canvas svg { width: 100%; height: 100%; }
.tag text { font: 700 7px "DejaVu Sans", sans-serif; fill: #fff; text-anchor: middle; }
.axis text { font: 12px "DejaVu Sans", sans-serif; fill: #343a45; text-anchor: middle; }
.note text { font: 300 15px "Noto Sans CJK SC", sans-serif; }
.snap { height: 27px; flex: none; display: flex; align-items: center; padding: 1px 0 0 2px; }
.snap-strip { margin-left: 3px; padding-right: 0; }
.snap-strip .plain { gap: 3px; }
.dlg-status { height: 22px; flex: none; display: flex; gap: 2px; margin: 4px 0 1px; }
.dlg-status span { border: 1px solid #d4d4d4; background: linear-gradient(#fdfdfd, #f1f1f1); width: 97px; padding: 2px 3px; }
.dlg-status span + span { flex: 1; display: flex; justify-content: space-between; align-items: center; padding: 0 1px; }
.dlg-status svg { align-self: flex-end; }

.status { height: 21px; flex: none; display: grid; grid-template-columns: 148px 78px 98px 48px 1fr 70px; gap: 2px; }
.status span { border: 1px solid #d4d4d4; background: linear-gradient(#fdfdfd, #f1f1f1); padding: 2px 1px 0; }

.task { height: 40px; flex: none; display: flex; background: #000b0e; color: #fff; }
.start { width: 48px; background: #000; justify-content: center; }
.desk { width: 344px; background: #333; display: flex; align-items: center; padding: 0 14px 0 9px; gap: 4px; }
.desk input { flex: 1; min-width: 0; font-size: 14px; outline: 0; }
.desk input::placeholder { color: #9c9c9c; opacity: 1; }
.apps { display: flex; padding-left: 2px; gap: 1px; }
.apps button { width: 48px; height: 40px; justify-content: center; }
.divider { width: 4px; height: 16px; margin: 12px 10px; border: 1px solid #333; border-width: 0 1px; }
.run { background: linear-gradient(#76b9ed, #76b9ed) center bottom / 40px 2px no-repeat; }
.run.current { background: linear-gradient(#76b9ed, #76b9ed) center bottom / 48px 2px no-repeat #343f42; }
.tray { margin-left: auto; display: flex; align-items: center; gap: 8px; }
.cpu, .clock { text-align: center; }
.cpu span, .clock span { display: block; line-height: 17px; }
.cpu { margin-right: 10px; }
.zh { font-size: 13px; margin: 0 5px 0 2px; }
.clock { margin: 0 8px 0 10px; }
.msg { margin: 0 23px 0 4px; }
</style>
